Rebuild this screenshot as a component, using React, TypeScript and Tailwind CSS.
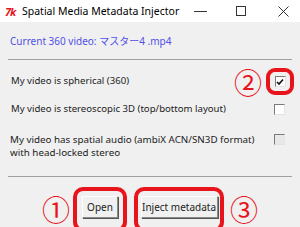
import React from "react"

function Check({ checked = false, disabled = false }: { checked?: boolean; disabled?: boolean }) {
    return (
        <div
            className={
                "w-[11px] h-[11px] border border-t-[#7a7a7a] border-l-[#7a7a7a] border-b-[#e3e3e3] border-r-[#e3e3e3] flex items-center justify-center " +
                (disabled ? "bg-[#e8e8e8]" : "bg-white")
            }
        >
            {checked && (
                <svg width="8" height="8" viewBox="0 0 8 8">
                    <path d="M1 4 L3 6 L7 1.5" fill="none" stroke="#111" strokeWidth="1.6" />
                </svg>
            )}
        </div>
    )
}

function TkButton({ label, width }: { label: string; width: string }) {
    return (
        <div
            className={
                width +
                " h-[22px] bg-[#f0f0f0] border border-t-white border-l-white border-b-[#8a8a8a] border-r-[#8a8a8a] shadow-[1px_1px_0_#555] flex items-center justify-center text-[10px] text-[#222]"
            }
        >
            {label}
        </div>
    )
}

function Circled({ ch }: { ch: string }) {
    return (
        <span className="text-[#e8141c] text-[28px] leading-none font-['Noto_Sans_CJK_JP',sans-serif]">{ch}</span>
    )
}

export default function App() {
    return (
        <div className="w-[300px] h-[227px] overflow-hidden bg-[#f0f0f0] font-['Noto_Sans','Noto_Sans_CJK_JP',sans-serif]">
            {/* title bar */}
            <div className="h-[22px] bg-white flex items-center">
                <span className="ml-[5px] w-[14px] text-[#e8141c] text-[11px] font-bold italic tracking-[-1px] leading-none">7k</span>
                <span className="ml-[3px] text-[10.5px] text-black leading-none">Spatial Media Metadata Injector</span>
                <div className="ml-auto flex items-center">
                    <svg width="14" height="10" viewBox="0 0 14 10" className="mr-[28px]">
                        <path d="M0 5.5 H13" stroke="#333" strokeWidth="1" />
                    </svg>
                    <svg width="11" height="11" viewBox="0 0 11 11" className="mr-[31px]">
                        <rect x="0.5" y="0.5" width="9" height="9" fill="none" stroke="#333" strokeWidth="1" />
                    </svg>
                    <svg width="11" height="11" viewBox="0 0 11 11" className="mr-[11px]">
                        <path d="M0.5 0.5 L10.5 10.5 M10.5 0.5 L0.5 10.5" stroke="#333" strokeWidth="1" />
                    </svg>
                </div>
            </div>

            {/* current file */}
            <div className="mt-[12px] ml-[10px] h-[14px] flex items-center text-[10px] text-[#5050e6] leading-none">
                Current 360 video: マスター4 .mp4
            </div>

            <div className="mt-[11px] mx-[8px] h-px bg-[#a0a0a0]" />

            {/* options */}
            <div className="mt-[8px] h-[27px] flex items-center pl-[11px] pr-[6px] text-[9.6px] text-[#222]">
                <span>My video is spherical (360)</span>
                <div className="ml-auto flex items-center">
                    <Circled ch="②" />
                    <div className="ml-[4px] w-[28px] h-[27px] border-[4px] border-[#e8141c] rounded-[9px] flex items-center justify-center">
                        <Check checked />
                    </div>
                </div>
            </div>

            <div className="mt-[7px] h-[14px] flex items-center pl-[11px] pr-[15px] text-[9.6px] text-[#222]">
                <span>My video is stereoscopic 3D (top/bottom layout)</span>
                <div className="ml-auto">
                    <Check />
                </div>
            </div>

            <div className="mt-[17px] flex items-start pl-[10px] pr-[15px] text-[9.8px] leading-[13px] text-[#222]">
                <span>
                    My video has spatial audio (ambiX ACN/SN3D format)
                    <br />
                    with head-locked stereo
                </span>
                <div className="ml-auto mt-[1px]">
                    <Check disabled />
                </div>
            </div>

            <div className="mt-[17px] mx-[8px] h-px bg-[#a0a0a0]" />

            {/* buttons */}
            <div className="mt-[10px] flex items-start justify-center">
                <div className="mt-[8px]">
                    <Circled ch="①" />
                </div>
                <div className="ml-[3px] w-[54px] h-[45px] border-[4px] border-[#e8141c] rounded-[10px] flex justify-center pt-[5px] shrink-0">
                    <TkButton label="Open" width="w-[36px]" />
                </div>
                <div className="ml-[7px] w-[90px] h-[45px] border-[4px] border-[#e8141c] rounded-[10px] flex justify-center pt-[5px] shrink-0">
                    <TkButton label="Inject metadata" width="w-[77px]" />
                </div>
                <div className="ml-[6px] mt-[8px]">
                    <Circled ch="③" />
                </div>
            </div>
        </div>
    )
}
